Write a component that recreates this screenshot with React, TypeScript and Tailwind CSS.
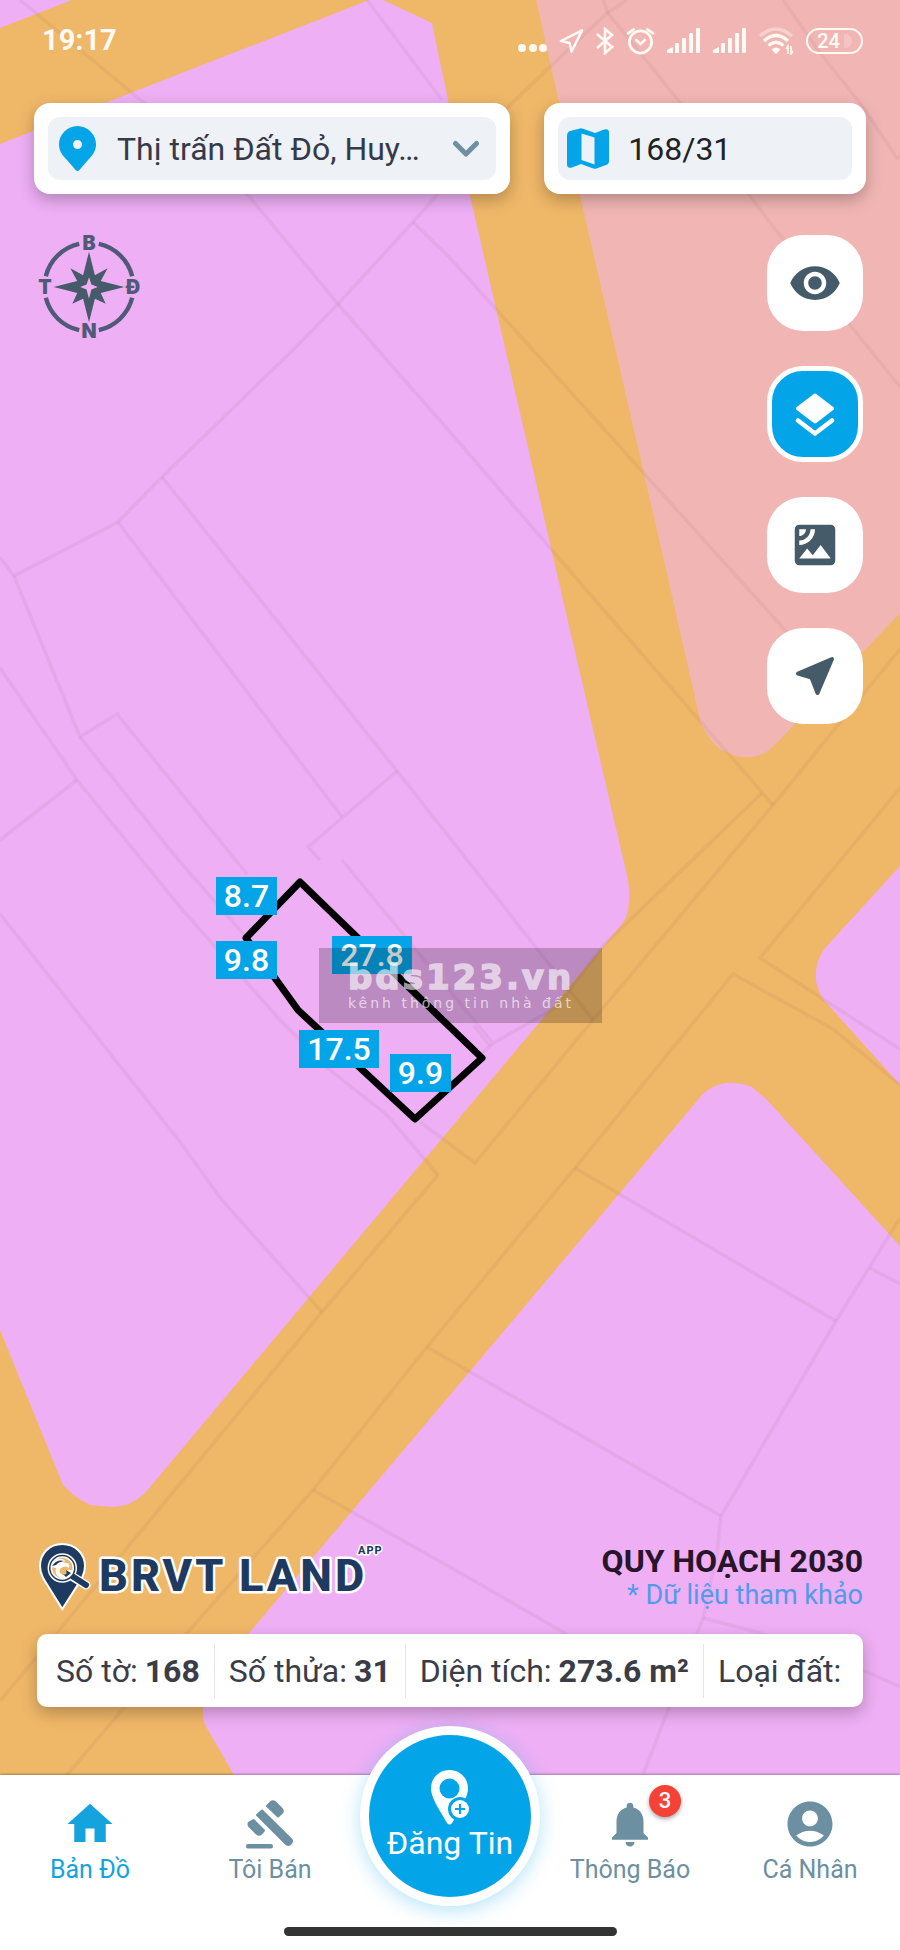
import type { ReactNode } from "react";
import { MdAccountCircle, MdHome, MdNotifications, MdSatellite, MdVisibility } from "react-icons/md";

const PARCEL_LINES = [
  "M20 0L143 102L248 195L338 304L378 350L450 432L595 600L773 805",
  "M367 0L442 100",
  "M627 0L607 13L510 105L437 195L413 222L338 304L293 350L162 477L118 522L14 576",
  "M413 222L450 258L740 580L785 630L832 690",
  "M603 0L608 13L678 100L768 220L850 325L900 387",
  "M783 0L820 53L860 103L897 158L900 156",
  "M0 557L14 576L80 737L117 714L247 874",
  "M80 737L180 862L262 955",
  "M0 668L77 780L180 907L280 1020L330 1070L387 1115L438 1175",
  "M77 780L0 840",
  "M162 477L397 771L450 838L593 1020",
  "M118 522L342 817",
  "M397 771L308 847L320 860",
  "M342 860L492 1042",
  "M474 1026L490 1046",
  "M762 793L603 946L557 1007L495 1042L480 1055",
  "M900 649L773 805L593 1020L475 1163L420 1122",
  "M438 1175L322 1312L60 1629L0 1701",
  "M0 914L180 1142L222 1200L322 1312",
  "M900 1085L833 1029L733 974L575 1168L427 1347L313 1490L188 1632L67 1775",
  "M900 788L760 958L900 1049",
  "M575 1168L800 1300L836 1321",
  "M900 1218L836 1321L721 1516L717 1553L703 1618L668 1710L643 1775",
  "M870 1268L900 1284",
  "M427 1347L721 1516",
  "M313 1490L450 1567L563 1632L668 1706",
  "M703 1618L760 1633L867 1672L900 1687",
];

const EDGES = [
  { x: 216, y: 877, w: 61, value: "8.7" },
  { x: 216, y: 941, w: 61, value: "9.8" },
  { x: 332, y: 936, w: 80, value: "27.8" },
  { x: 299, y: 1030, w: 80, value: "17.5" },
  { x: 390, y: 1054, w: 61, value: "9.9" },
];

function ZoningMap() {
  return (
    <svg
      viewBox="0 0 900 1775"
      preserveAspectRatio="xMidYMid slice"
      className="absolute inset-0 h-full w-full"
      role="img"
      aria-label="Bản đồ quy hoạch"
    >
      <rect width="900" height="1775" fill="#efb768" />
      <g fill="#eeaff5">
        <path d="M0 0H72L0 28Z" />
        <path d="M0 144L369 0H383L432 23L448 100L563 600L628 880Q632 912 622 924L450 1129L145 1493Q130 1507 112 1507L90 1505Q75 1498 63 1485L0 1330Z" />
        <path d="M900 866L825 948Q808 972 822 998L900 1085Z" />
        <path d="M900 1246L767 1100L752 1087Q738 1082 725 1083Q706 1087 697 1101L530 1300L450 1395L250 1632L206 1690Q201 1706 204 1723L234 1775H900Z" />
      </g>
      <path
        d="M536 0H900V613L773 747Q763 756 752 757Q740 758 733 755Q718 750 712 741Q704 732 700 720L673 600L585 217Z"
        fill="#f1b6b4"
      />
      <g fill="none" stroke="#824650" strokeOpacity="0.075" strokeWidth="3.500">
        {PARCEL_LINES.map((d) => (
          <path key={d} d={d} />
        ))}
      </g>
      <path
        d="M300 882L482 1058L415 1119L298 1010L246 938Z"
        fill="none"
        stroke="#000"
        strokeWidth="7"
        strokeLinejoin="round"
      />
      {EDGES.map((edge) => (
        <g key={edge.value}>
          <rect x={edge.x} y={edge.y} width={edge.w} height="38" fill="#04a5e8" />
          <text
            x={edge.x + edge.w / 2}
            y={edge.y + 30}
            textAnchor="middle"
            fill="#fff"
            className="font-[Roboto,sans-serif] text-[32px] font-medium"
          >
            {edge.value}
          </text>
        </g>
      ))}
      <g>
        <rect x="319" y="948" width="283" height="75" fill="#000" fillOpacity="0.21" />
        <text
          x="348"
          y="989"
          fill="#fff"
          stroke="#fff"
          strokeWidth="1.500"
          opacity="0.6"
          className="font-['DejaVu_Sans',sans-serif] text-[34px] font-bold tracking-[3px]"
        >
          bds123.vn
        </text>
        <text
          x="348"
          y="1008"
          fill="#fff"
          fillOpacity="0.65"
          className="font-['DejaVu_Sans',sans-serif] text-[14px] tracking-[3px]"
        >
          kênh thông tin nhà đất
        </text>
      </g>
    </svg>
  );
}

function SignalIcon() {
  return (
    <svg width="34" height="26" viewBox="0 0 34 26" fill="currentColor" aria-hidden="true">
      <path d="M0 25V22L6 19V25Z" />
      <rect x="8" y="15" width="4" height="10" rx="1" />
      <rect x="15" y="10" width="4" height="15" rx="1" />
      <rect x="22" y="5" width="4" height="20" rx="1" />
      <rect x="29" y="0" width="4" height="25" rx="1" />
    </svg>
  );
}

function StatusBar() {
  return (
    <div className="flex h-[82px] items-center justify-between pl-[42px] pr-[37px] text-[#fffaf4]">
      <span className="text-[29px] font-bold">19:17</span>
      <div className="flex items-center gap-3">
        <svg width="29" height="28" viewBox="0 0 29 28" fill="currentColor" aria-hidden="true">
          <circle cx="4" cy="21" r="4" />
          <circle cx="15" cy="21" r="4" />
          <circle cx="25" cy="21" r="4" />
        </svg>
        <svg width="25" height="28" viewBox="0 0 26 28" fill="none" stroke="currentColor" strokeWidth="2.600" strokeLinejoin="round" aria-hidden="true">
          <path d="M24 3L13 25L11 16L2 14Z" />
        </svg>
        <svg width="18" height="28" viewBox="0 0 18 28" fill="none" stroke="currentColor" strokeWidth="2.600" aria-hidden="true">
          <path d="M1 7L16 20L9 26V2L16 8L1 21" />
        </svg>
        <svg width="29" height="28" viewBox="0 0 30 28" fill="none" stroke="currentColor" strokeWidth="2.800" strokeLinecap="round" aria-hidden="true">
          <circle cx="15" cy="15" r="11.500" />
          <path d="M10.500 13L15 17L19.500 13M2 6L8 2M28 6L22 2" />
        </svg>
        <SignalIcon />
        <SignalIcon />
        <svg width="35" height="28" viewBox="0 0 35 28" fill="none" stroke="currentColor" strokeWidth="3.200" aria-hidden="true">
          <path d="M1 9Q17 -5 33 9" strokeOpacity="0.4" />
          <path d="M5 14Q17 3 29 14" />
          <path d="M9.500 18.500Q17 12 24.500 18.500" />
          <path d="M12.500 22.500Q17 18.500 21.500 22.500L17 27Z" fill="currentColor" stroke="none" />
          <path d="M29 27V19L27 22M32 19V27L34 24" strokeWidth="1.500" />
        </svg>
        <span className="flex h-[26px] w-[57px] items-center justify-center gap-1 rounded-full border-2 border-current text-[20px] font-medium leading-[20px]">
          24
          <span className="h-[14px] w-2 rounded-r-full bg-white/20" />
        </span>
      </div>
    </div>
  );
}

function SearchBar() {
  return (
    <form className="mt-[21px] grid grid-cols-[37fr_25fr] gap-[34px] px-[34px]">
      <div className="rounded-2xl bg-white p-[14px] shadow-[0_6px_16px_rgba(0,0,0,0.25)]">
        <div className="relative flex h-[63px] items-center rounded-xl bg-[#eef1f6]">
          <svg width="37" height="46" viewBox="0 0 37 46" className="ml-[11px] shrink-0" aria-hidden="true">
            <path
              fill="#04a5e8"
              fillRule="evenodd"
              d="M18.500 0C8.300 0 0 8.300 0 18.500c0 6 3 10.500 8 15.600l8.600 10q1.900 2 3.800 0l8.600-10c5-5.100 8-9.600 8-15.600C37 8.300 28.700 0 18.500 0Zm0 14a4.500 4.500 0 1 1 0 9a4.500 4.500 0 0 1 0-9Z"
            />
          </svg>
          <select
            aria-label="Khu vực"
            className="h-full min-w-0 flex-1 appearance-none bg-transparent pl-[21px] pr-12 text-[32px] text-[#343a49] outline-none"
          >
            <option>Thị trấn Đất Đỏ, Huy…</option>
          </select>
          <svg
            width="28"
            height="18"
            viewBox="0 0 28 18"
            fill="none"
            stroke="#6f90a2"
            strokeWidth="5"
            strokeLinecap="round"
            strokeLinejoin="round"
            className="pointer-events-none absolute right-4"
            aria-hidden="true"
          >
            <path d="M3.500 3.500L14 14L24.500 3.500" />
          </svg>
        </div>
      </div>
      <div className="rounded-2xl bg-white p-[14px] shadow-[0_6px_16px_rgba(0,0,0,0.25)]">
        <div className="flex h-[63px] items-center rounded-xl bg-[#eef1f6]">
          <svg width="42" height="42" viewBox="0 0 42 42" className="ml-[9px] shrink-0" aria-hidden="true">
            <path
              fill="#04a5e8"
              fillRule="evenodd"
              d="M0 8Q0 4 3 3L12 .7Q14 0 16 .7L28 5L37 1.500Q42 0 42 4.500V33Q42 36 39 37L29.500 40.500Q27.500 41 25.500 40.300L14 36L5 39.500Q0 41 0 36ZM14.500 5.500V32L27.500 36.500V9.500Z"
            />
          </svg>
          <input
            aria-label="Số tờ / số thửa"
            defaultValue="168/31"
            className="h-full w-full min-w-0 bg-transparent pl-[19px] pr-3 text-[32px] text-[#202124] outline-none"
          />
        </div>
      </div>
    </form>
  );
}

function Compass() {
  return (
    <svg width="104" height="104" viewBox="-53 -53 106 106" className="overflow-visible" aria-label="La bàn" role="img">
      <g fill="none" stroke="#4e5a77" strokeWidth="4.500">
        <path d="M10 -44A45 45 0 0 1 44 -11" />
        <path d="M44 11A45 45 0 0 1 10 44" />
        <path d="M-10 44A45 45 0 0 1 -44 11" />
        <path d="M-44 -11A45 45 0 0 1 -10 -44" />
      </g>
      <path
        fill="#455b69"
        d="M0 -36L6 -12L19 -19L12 -6L36 0L12 6L17 17L6 12L0 36L-6 12L-17 17L-12 6L-36 0L-12 -6L-19 -19L-6 -12Z"
      />
      <path fill="#eeaff5" d="M0 -10L2.500 -2.500L9 0L2.500 2.500L0 12L-2.500 2.500L-9 0L-2.500 -2.500Z" />
      <g fill="#4e5a77" textAnchor="middle" className="font-[Inter,sans-serif] text-[20px] font-black">
        <text x="0" y="-38">B</text>
        <text x="0" y="52">N</text>
        <text x="-45" y="7">T</text>
        <text x="45" y="7">Đ</text>
      </g>
    </svg>
  );
}

function MapButton({ label, children }: { label: string; children: ReactNode }) {
  return (
    <button
      type="button"
      aria-label={label}
      className="flex size-24 items-center justify-center rounded-[36px] bg-white text-[#455b69]"
    >
      {children}
    </button>
  );
}

function MapControls() {
  return (
    <div className="flex flex-col gap-[35px]">
      <MapButton label="Hiển thị">
        <MdVisibility size={54} />
      </MapButton>
      <button
        type="button"
        aria-label="Lớp bản đồ"
        aria-pressed="true"
        className="flex size-24 items-center justify-center rounded-[36px] border-[5px] border-white bg-[#04a5e8] text-white"
      >
        <svg width="40" height="43" viewBox="0 0 40 43" fill="none" stroke="currentColor" strokeLinejoin="round" strokeLinecap="round" aria-hidden="true">
          <path d="M20 2.500L37 15.500L20 28.500L3 15.500Z" fill="currentColor" strokeWidth="4" />
          <path d="M3 27.500L20 40.500L37 27.500" strokeWidth="4.500" />
        </svg>
      </button>
      <MapButton label="Ảnh vệ tinh">
        <MdSatellite size={54} />
      </MapButton>
      <MapButton label="Vị trí của tôi">
        <svg width="40" height="40" viewBox="0 0 40 40" fill="currentColor" stroke="currentColor" strokeWidth="4" strokeLinejoin="round" aria-hidden="true">
          <path d="M37 3L22.500 37L16.500 21.500L3 17.500Z" />
        </svg>
      </MapButton>
    </div>
  );
}

function Logo() {
  return (
    <svg width="346" height="72" viewBox="0 0 346 72" role="img" aria-label="BRVT LAND APP">
      <path
        d="M25.300 2C12 2 3 12 3 24c0 8 4 14 8 20l14.300 23L40 44c4-6 8-12 8-20C48 12 38.500 2 25.300 2Z"
        fill="#1f3a60"
        stroke="#fff"
        strokeWidth="2"
      />
      <path d="M36 35L49 43" stroke="#fff" strokeWidth="9" strokeLinecap="round" />
      <circle cx="25.300" cy="26" r="14" fill="#1f3a60" stroke="#fff" strokeWidth="1.500" />
      <path d="M35 34L49 43" stroke="#1f3a60" strokeWidth="6" strokeLinecap="round" />
      <circle cx="25.300" cy="26" r="11" fill="#efb768" stroke="#fff" strokeWidth="1.500" />
      <path
        d="M14 25Q16 16 25 17Q30 18 26 21Q34 20 32 26Q29 23 24 26Q20 30 26 33Q33 33 30 28Q35 27 36 30Q32 38 23 36Q17 33 19 26Z"
        fill="#fff"
      />
      <path d="M15 24Q20 17 27 19Q21 20 19 23ZM26 32Q31 34 29 28L34 31L29 35Z" fill="#1f3a60" />
      <g
        fill="#1f3a60"
        stroke="#fff"
        strokeWidth="5"
        strokeLinejoin="round"
        className="font-[Roboto,sans-serif] font-extrabold [paint-order:stroke]"
      >
        <text x="62" y="49" className="text-[45px] tracking-[3px]">BRVT</text>
        <text x="202" y="49" className="text-[45px] tracking-[3px]">LAND</text>
        <text x="321" y="12" strokeWidth="3" className="text-[11px] tracking-[1px]">APP</text>
      </g>
    </svg>
  );
}

const FACTS = [
  { label: "Số tờ:", value: "168" },
  { label: "Số thửa:", value: "31" },
  { label: "Diện tích:", value: "273.6 m²" },
  { label: "Loại đất:", value: "" },
];

function ParcelInfo() {
  return (
    <dl className="mt-5 flex h-[73px] items-center overflow-hidden whitespace-nowrap rounded-[10px] bg-white px-[5px] text-[32px] text-[#3a3d47] shadow-[0_6px_16px_rgba(0,0,0,0.25)]">
      {FACTS.map((fact) => (
        <div
          key={fact.label}
          className="flex h-[54px] items-center gap-[7px] border-r border-[#e4e5ea] px-[14px] last:border-r-0"
        >
          <dt>{fact.label}</dt>
          <dd className="font-bold">{fact.value}</dd>
        </div>
      ))}
    </dl>
  );
}

function GavelIcon() {
  return (
    <svg width="54" height="54" viewBox="-3 -3 54 54" fill="currentColor" stroke="currentColor" strokeWidth="2" strokeLinejoin="round" aria-hidden="true">
      <path d="M21 6L25 2Q27 .5 29 2L36 9Q37.500 11 36 13L32 16.500Z" />
      <path d="M11 15L16 10.500L45 39Q47 41 45 43.500Q42.500 46 40 44Z" />
      <path d="M7.500 20L18 30.500L15 34Q13 35.500 11 34L3 26Q2 24 3 22.500Z" />
      <rect x="1" y="45" width="25" height="2.500" rx="1" />
    </svg>
  );
}

function NavItem({ label, active, children }: { label: string; active?: boolean; children: ReactNode }) {
  return (
    <a
      href="#"
      aria-current={active ? "page" : undefined}
      className={`flex flex-col items-center gap-[3px] pt-[22px] ${active ? "text-[#14a3dc]" : "text-[#6c8fa2]"}`}
    >
      {children}
      <span className="whitespace-nowrap text-[25px] leading-[32px]">{label}</span>
    </a>
  );
}

function BottomNav() {
  return (
    <nav className="relative bg-white pb-[14px] shadow-[0_-1px_2px_rgba(0,0,0,0.3)]">
      <div className="grid grid-cols-5">
        <NavItem label="Bản Đồ" active>
          <MdHome size={54} />
        </NavItem>
        <NavItem label="Tôi Bán">
          <GavelIcon />
        </NavItem>
        <button
          type="button"
          className="-mt-[49px] flex size-[180px] flex-col items-center gap-[2px] justify-self-center rounded-full border-[9px] border-white bg-[#04a5e8] pt-[34px] text-white shadow-[0_4px_20px_rgba(4,165,232,0.3)]"
        >
          <svg width="40" height="56" viewBox="0 0 40 56" aria-hidden="true">
            <path
              fill="#fff"
              fillRule="evenodd"
              d="M19.500 1C9 1 1 9 1 19.500C1 25 4 31 7 37L17 54Q19.500 57 22 54L32 37C35 31 38 25 38 19.500C38 9 30 1 19.500 1ZM19.500 9.500a10 10 0 1 1 0 20a10 10 0 0 1 0-20Z"
            />
            <circle cx="30" cy="40" r="12" fill="#04a5e8" />
            <circle cx="30" cy="40" r="9" fill="#fff" />
            <path d="M30 35V45M25 40H35" stroke="#04a5e8" strokeWidth="2" />
          </svg>
          <span className="whitespace-nowrap text-[32px] leading-[32px]">Đăng Tin</span>
        </button>
        <NavItem label="Thông Báo">
          <span className="relative">
            <MdNotifications size={54} />
            <span className="absolute -top-3 left-[46px] flex size-8 items-center justify-center rounded-full bg-[#f44336] text-[22px] font-medium leading-none text-white shadow-[0_2px_4px_rgba(0,0,0,0.35)]">
              3
            </span>
          </span>
        </NavItem>
        <NavItem label="Cá Nhân">
          <MdAccountCircle size={54} />
        </NavItem>
      </div>
      <div className="mx-auto mt-[21px] h-[9px] w-[37%] rounded-full bg-[#333]" />
    </nav>
  );
}

export default function App() {
  return (
    <div className="flex min-h-screen flex-col overflow-hidden font-[Roboto,sans-serif]">
      <main className="relative flex flex-1 flex-col">
        <ZoningMap />
        <div className="relative flex flex-1 flex-col">
          <StatusBar />
          <SearchBar />
          <div className="mt-[41px] flex items-start justify-between px-[37px]">
            <Compass />
            <MapControls />
          </div>
          <div className="mt-auto px-[37px] pb-[68px] pt-10">
            <div className="flex items-start justify-between">
              <Logo />
              <div className="text-right">
                <p className="text-[32px] font-bold leading-[38px] text-[#26152b]">QUY HOẠCH 2030</p>
                <p className="text-[27px] leading-[30px] text-[#519bed]">* Dữ liệu tham khảo</p>
              </div>
            </div>
            <ParcelInfo />
          </div>
        </div>
      </main>
      <BottomNav />
    </div>
  );
}
